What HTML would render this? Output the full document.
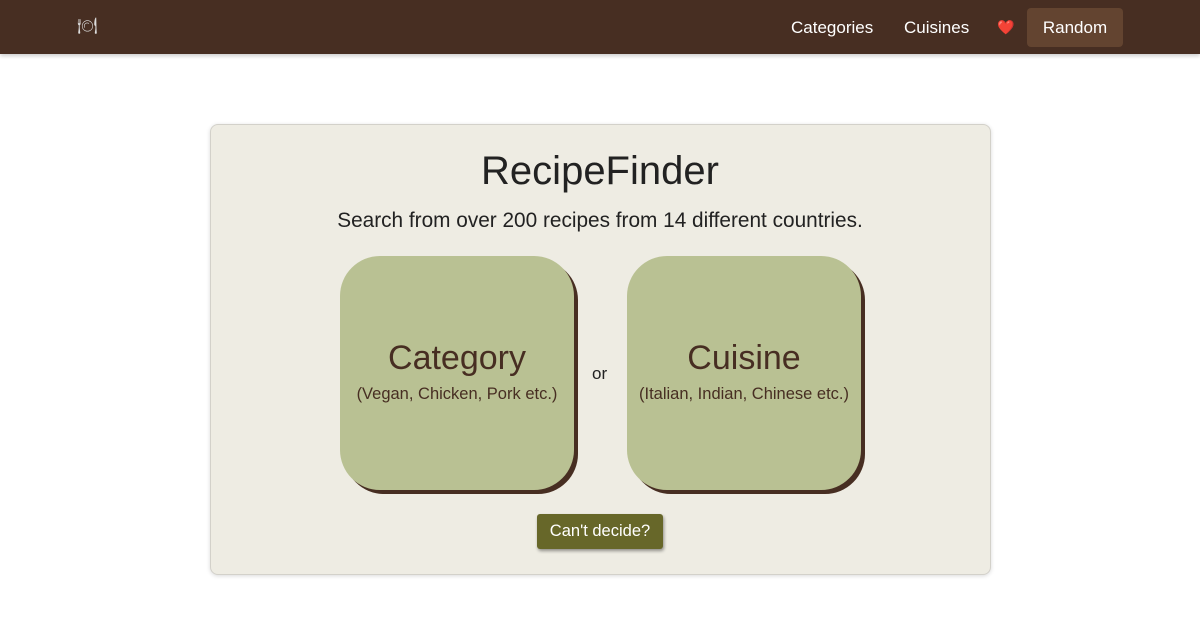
<!DOCTYPE html>
<html><head><style>
body{margin:0;width:1200px;height:623px;background:#fff;font-family:"Liberation Sans",sans-serif;overflow:hidden;position:relative}
.nav{position:absolute;left:0;top:0;width:1200px;height:54px;background:#472e22;box-shadow:0 2px 4px rgba(0,0,0,.2)}
.nav span{position:absolute;top:17px;color:#fff;font-size:17px}
.rand{position:absolute;left:1027px;top:8px;width:96px;height:39px;background:#634430;border-radius:4px;color:#fff;font-size:17px;text-align:center;line-height:39px}
.panel{position:absolute;left:210px;top:124px;width:779px;height:449px;background:#eeece3;border:1px solid #d3d1ca;border-radius:8px;box-shadow:0 1px 4px rgba(0,0,0,.15)}
h1{position:absolute;left:0;width:100%;top:149px;margin:0;text-align:center;font-weight:normal;font-size:40px;color:#222}
.sub{position:absolute;left:0;width:100%;top:209px;text-align:center;font-size:20.8px;color:#222}
.card{position:absolute;top:256px;width:234px;height:234px;background:#b9c193;border-radius:40px;box-shadow:4px 4px 0 #472e22;text-align:center;color:#472e22}
.card .t{position:absolute;top:83px;width:100%;font-size:34px}
.card .s{position:absolute;top:129px;width:100%;font-size:16.5px}
.or{position:absolute;left:592px;top:364px;font-size:17px;color:#222}
.btn{position:absolute;left:537px;top:514px;width:126px;height:35px;background:#676729;border-radius:3px;box-shadow:1px 2px 3px rgba(0,0,0,.4);color:#fff;font-size:16.5px;text-align:center;line-height:35px}
</style></head><body>
<div class="nav">
<span style="left:77px;top:16px;font-size:16px;color:#ddd">🍽</span>
<span style="left:791px;top:18px">Categories</span>
<span style="left:904px;top:18px">Cuisines</span>
<span style="left:997px;font-size:14px;top:19px">❤️</span>
<div class="rand">Random</div>
</div>
<div class="panel"></div>
<h1>RecipeFinder</h1>
<div class="sub">Search from over 200 recipes from 14 different countries.</div>
<div class="card" style="left:340px"><div class="t">Category</div><div class="s">(Vegan, Chicken, Pork etc.)</div></div>
<div class="or">or</div>
<div class="card" style="left:627px"><div class="t">Cuisine</div><div class="s">(Italian, Indian, Chinese etc.)</div></div>
<div class="btn">Can't decide?</div>
</body></html>
